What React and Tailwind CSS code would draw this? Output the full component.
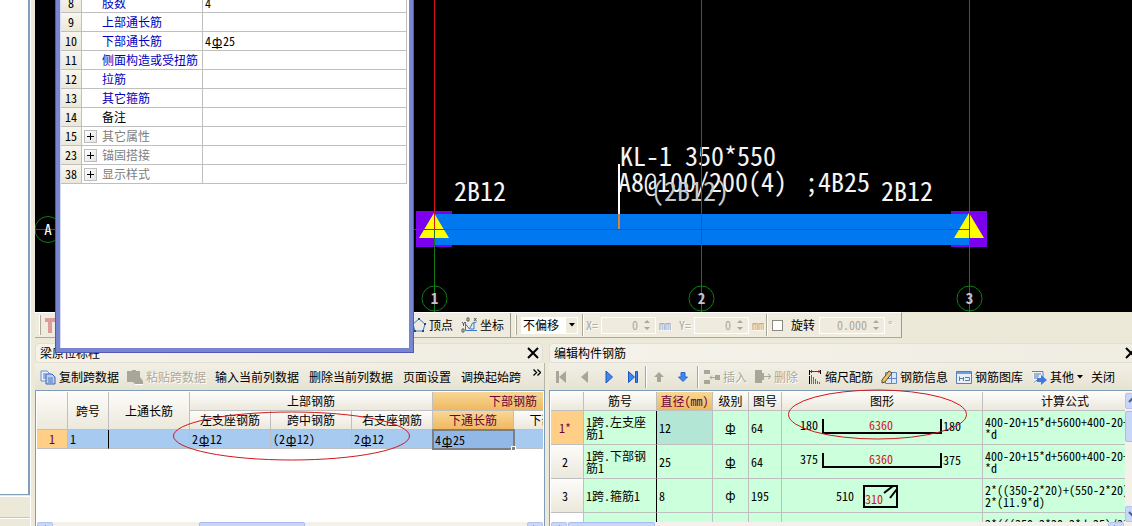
import React from "react";

const line = "border-[#bfbfbf]";
const headBg = "bg-linear-to-b from-[#fdfcf9] to-[#ebe8dc]";
const activeBg = "bg-linear-to-b from-[#f8d796] to-[#efb85e] text-[#6a003a]";

/* Rebar grade mark: plain for grade I, underlined for grade II. */
function Grade({ plain }) {
  return (
    <span
      className={
        plain
          ? "inline-block w-3 text-center font-['DejaVu_Sans',sans-serif] leading-3"
          : "inline-block w-3 text-center font-['DejaVu_Sans',sans-serif] leading-3 underline decoration-1 underline-offset-1 [text-decoration-skip-ink:none]"
      }
    >
      ф
    </span>
  );
}

function Svg({ children, w = 16 }) {
  return (
    <svg width={w} height="16" viewBox={`0 0 ${w} 16`} fill="none" className="shrink-0" aria-hidden="true">
      {children}
    </svg>
  );
}

function Tool({ icon, label, disabled, children }) {
  return (
    <button
      type="button"
      disabled={disabled}
      className="flex shrink-0 items-center gap-[3px] whitespace-nowrap text-black disabled:text-[#aca899] disabled:[text-shadow:1px_1px_0_#fff]"
    >
      {icon}
      <span>{label}</span>
      {children}
    </button>
  );
}

function IconButton({ label, disabled, children }) {
  return (
    <button type="button" aria-label={label} disabled={disabled} className="flex w-6 shrink-0 justify-center">
      <Svg>{children}</Svg>
    </button>
  );
}

function Separator() {
  return <span className="h-[22px] w-0.5 shrink-0 border-l border-[#aca899] bg-white" />;
}

const properties = [
  { n: 8, name: "肢数", value: "4" },
  { n: 9, name: "上部通长筋" },
  { n: 10, name: "下部通长筋", value: <>4<Grade />25</> },
  { n: 11, name: "侧面构造或受扭筋" },
  { n: 12, name: "拉筋" },
  { n: 13, name: "其它箍筋" },
  { n: 14, name: "备注", tone: "text-black" },
  { n: 15, name: "其它属性", group: true },
  { n: 23, name: "锚固搭接", group: true },
  { n: 38, name: "显示样式", group: true },
];

function PropertyWindow() {
  return (
    <section
      aria-label="属性"
      className="absolute -top-px left-[55px] h-[354px] w-[359px] border-x-[5px] border-b-[5px] border-[#7886d2] bg-white shadow-[inset_1px_0_0_#d8dcf2] outline outline-1 -outline-offset-1 outline-[#5258b4]"
    >
      <div className="flex h-[185px] flex-col justify-end overflow-hidden pr-0.5 pl-px">
        <table className="w-full table-fixed border-separate border-spacing-0">
          <colgroup>
            <col className="w-[21px]" />
            <col className="w-[121px]" />
            <col />
          </colgroup>
          <tbody>
            {properties.map((p) => (
              <tr key={p.n} className="h-[19px]">
                <th
                  scope="row"
                  className={`border-r border-b ${line} bg-linear-to-b from-[#f8f6ee] to-[#ebe8d9] p-0 text-center font-normal`}
                >
                  {p.n}
                </th>
                <td className={`border-r border-b ${line} p-0`}>
                  <div className="flex items-center whitespace-nowrap">
                    <span className="flex w-5 shrink-0 pl-0.5">
                      {p.group && (
                        <button
                          type="button"
                          aria-label={`展开${p.name}`}
                          className="flex size-[13px] items-center justify-center border border-[#bdbdbd] bg-linear-to-br from-white to-[#e4e4e4]"
                        >
                          <svg width="7" height="7" aria-hidden="true">
                            <path d="M0 3.500h7M3.500 0v7" stroke="#000" />
                          </svg>
                        </button>
                      )}
                    </span>
                    <span className={p.group ? "text-[#808080]" : p.tone || "text-[#0000c0]"}>{p.name}</span>
                  </div>
                </td>
                <td className={`border-r border-b ${line} p-0 pl-0.5`}>{p.value}</td>
              </tr>
            ))}
          </tbody>
        </table>
      </div>
    </section>
  );
}

function AxisMark({ x, label }) {
  return (
    <g>
      <path d={`M${x} 0V229`} stroke="#d0181c" shapeRendering="crispEdges" />
      <path d={`M${x} 229V312`} stroke="#127a18" shapeRendering="crispEdges" />
      <circle cx={x} cy="298.5" r="12.5" stroke="#127a18" />
      <text x={x} y="304" textAnchor="middle" fill="#c9c0cf" fontSize="15" fontWeight="bold">
        {label}
      </text>
    </g>
  );
}

function Canvas() {
  return (
    <svg className="block h-[312px] w-full shrink-0 bg-black" fill="none" role="img" aria-label="梁平面图">
      <g transform="translate(-35 0)">
        <path d="M416 211h36v36h-36zM951 211h36v36h-36z" fill="#7a00ee" />
        <path d="M434 214h535v31H434z" fill="#0078f0" />
        <path d="M434 213l15 25h-30zM969 213l15 25h-30z" fill="#ffff00" />
        <circle cx="48" cy="229.5" r="13" stroke="#127a18" />
        <path d="M35 229.5h400" stroke="#2a5a3a" />
        <text x="48" y="235" textAnchor="middle" fill="#fff" fontSize="15">A</text>
        <g fill="#f4f4f4" fontSize="26">
          <text x="454" y="201">2B12</text>
          <text x="620" y="166" className="whitespace-pre">KL-1 350*550</text>
          <text x="618" y="192">A8@100/200(4)</text>
          <text x="805" y="192">;4B25</text>
          <text x="651" y="201" fill="#c8c8c8">(2B12)</text>
          <text x="881" y="201">2B12</text>
        </g>
        <path d="M434 229.5h535" stroke="#d0181c" shapeRendering="crispEdges" />
        <AxisMark x={434.5} label="1" />
        <AxisMark x={701.5} label="2" />
        <AxisMark x={969.5} label="3" />
        <path d="M619 164v50" stroke="#fff" strokeWidth="2" />
        <path d="M619 214v15" stroke="#e08030" strokeWidth="2" />
      </g>
    </svg>
  );
}

function Spin({ label, unit, value, wide }) {
  return (
    <label className="flex items-center gap-[3px] text-[#aca899]">
      {label && <span className="[text-shadow:1px_1px_0_#fff]">{label}</span>}
      <span className={`flex h-[17px] items-center border border-white ${wide ? "w-[66px]" : "w-[55px]"}`}>
        <input disabled defaultValue={value} aria-label={label || "旋转角度"} className="w-0 grow bg-transparent text-right" />
        <svg width="17" height="14" className="shrink-0" aria-hidden="true">
          <path d="M6 5l3-3 3 3zM6 9l3 3 3-3z" fill="#aca899" />
        </svg>
      </span>
      <span className="[text-shadow:1px_1px_0_#fff]">{unit}</span>
    </label>
  );
}

function OffsetBar() {
  return (
    <div className="flex h-[26px] w-fit shrink-0 items-center border-t border-r border-b border-t-white border-r-[#9c9a8c] border-b-[#aca899] bg-[#efecdf]">
      <span className="ml-1 h-5 w-0.5 border-r border-[#aca899] bg-white" />
      <span className="ml-1 w-[367px]">
        <Svg>
          <path d="M0 3h12M5 1v15" stroke="#dc9c9a" strokeWidth="4" />
        </Svg>
      </span>
      <div className="flex items-center gap-2">
        <Tool
          label="顶点"
          icon={
            <Svg w={14}>
              <path d="M7 2L13 7L11 14H3L1 7z" stroke="#3a78c8" />
              <path d="M6 1h2v2H6zM12 6h2v2h-2zM10 13h2v2h-2zM2 13h2v2H2z" fill="#1c4a90" />
            </Svg>
          }
        />
        <Tool
          label="坐标"
          icon={
            <Svg>
              <path d="M4.500 5v8.500H16M4.500 7l4 5 3-6 4-1M9 12h4V6" stroke="#3a78c8" />
              <path d="M1 5l1.500 2L4 5M2.500 7v2M13 1l2.500 3M15.500 1L13 4M1 12h2v3H1zM6 1h2v3H6z" stroke="#555" />
            </Svg>
          }
        />
      </div>
      <span className="mr-1 ml-1.5 h-6 w-px bg-[#9c9a8c]" />
      <span className="h-5 w-0.5 border-r border-[#aca899] bg-white" />
      <span className="relative ml-1 flex">
        <select aria-label="偏移方式" className="h-[17px] w-[57px] appearance-none bg-white pl-0.5 text-black" defaultValue="不偏移">
          <option>不偏移</option>
        </select>
        <span className="pointer-events-none absolute top-0 right-0 flex h-[17px] w-[13px] items-center justify-center border border-white bg-[#efecdf]">
          <svg width="6" height="4" aria-hidden="true">
            <path d="M0 0h6L3 3.500z" fill="#000" />
          </svg>
        </span>
      </span>
      <span className="mr-0.5 ml-1 flex"><Separator /></span>
      <Spin label="X=" unit="mm" value="0" />
      <span className="w-2" />
      <Spin label="Y=" unit="mm" value="0" />
      <span className="mr-1 ml-0.5 flex"><Separator /></span>
      <label className="flex items-center gap-2">
        <input type="checkbox" className="size-[11px] appearance-none border border-[#8a8a80] bg-white" />
        旋转
      </label>
      <span className="w-1" />
      <Spin unit="°" value="0.000" wide />
      <span className="w-2" />
    </div>
  );
}

function PanelTitle({ children, bleed }) {
  return (
    <header
      className={`flex h-5 shrink-0 items-center justify-between rounded-sm border border-[#e2dfd2] bg-linear-to-r from-[#f4f2ea] to-[#f0eee3] pr-[3px] pl-1 ${
        bleed ? "-mr-[9px]" : "mr-0.5"
      }`}
    >
      <h2 className="whitespace-nowrap">{children}</h2>
      <button type="button" aria-label="关闭面板">
        <svg width="12" height="12" aria-hidden="true">
          <path d="M1 1l10 10M11 1L1 11" stroke="#000" strokeWidth="2" />
        </svg>
      </button>
    </header>
  );
}

function ScrollEnd({ dir }) {
  const d = {
    up: "M4 9l4-4 4 4",
    down: "M4 6l4 4 4-4",
    left: "M9 4L5 8l4 4",
    right: "M6 4l4 4-4 4",
  }[dir];
  return (
    <span className="size-4 shrink-0 rounded-xs border border-[#b4c4f0] bg-[#c8d6fa]">
      <svg width="14" height="14" viewBox="1 1 14 14" fill="none" aria-hidden="true">
        <path d={d} stroke="#4d6185" strokeWidth="2" />
      </svg>
    </span>
  );
}

function Th({ active, className = "", ...rest }) {
  return (
    <th
      {...rest}
      className={`border-r border-b ${line} p-0 text-center font-normal whitespace-nowrap ${active ? activeBg : headBg} ${className}`}
    />
  );
}

function SpanPanel() {
  const cell = `border-r border-b ${line} p-0 pl-0.5 text-left`;
  return (
    <section className="flex min-w-0 flex-col">
      <PanelTitle>梁原位标柱</PanelTitle>
      <div className="flex h-[27px] shrink-0 items-center gap-2 overflow-hidden border-r border-[#b8b5a6] bg-linear-to-b from-[#f2f0e6] to-[#e6e3d2] pl-[5px]">
        <Tool
          label="复制跨数据"
          icon={
            <Svg>
              <path d="M1 2h6l2 2v8H1z" fill="#eaf2ff" stroke="#6c8cc8" />
              <path d="M6 5h6l3 3v7H6z" fill="#b8d0f6" stroke="#3f64b0" />
              <path d="M3 5h3M3 7h3M3 9h3M8 9h5M8 11h5M8 13h5" stroke="#4a74c0" />
            </Svg>
          }
        />
        <Tool
          disabled
          label="粘贴跨数据"
          icon={
            <Svg>
              <path d="M0 2h5V1h4v1h4v6l3 4v3H8l-2-2H0z" fill="#a8a698" />
              <path d="M8 15.500h8.500V12" stroke="#fff" />
            </Svg>
          }
        />
        <span className="flex gap-2.5 pl-px">
          <Tool label="输入当前列数据" />
          <Tool label="删除当前列数据" />
          <Tool label="页面设置" />
          <Tool label="调换起始跨" />
        </span>
        <button type="button" aria-label="更多" className="mb-2 ml-1">
          <svg width="8" height="7" fill="none" aria-hidden="true">
            <path d="M.5 .5l3 3-3 3M4.500 .5l3 3-3 3" stroke="#000" strokeWidth="1.400" />
          </svg>
        </button>
      </div>
      <div className="flex flex-col border border-b-0 border-[#7f9db9] bg-white p-px">
        <div className="h-[130px] overflow-hidden">
          <table className="w-[557px] table-fixed border-separate border-spacing-0">
            <colgroup>
              <col className="w-[31px]" />
              <col className="w-[41px]" />
              <col className="w-[81px]" />
              <col className="w-[81px]" />
              <col className="w-[81px]" />
              <col className="w-[81px]" />
              <col className="w-[81px]" />
              <col className="w-[80px]" />
            </colgroup>
            <thead>
              <tr className="h-[19px]">
                <Th rowSpan={2} />
                <Th rowSpan={2}>跨号</Th>
                <Th rowSpan={2}>上通长筋</Th>
                <Th colSpan={3}>上部钢筋</Th>
                <Th colSpan={2} active>下部钢筋</Th>
              </tr>
              <tr className="h-[19px]">
                <Th>左支座钢筋</Th>
                <Th>跨中钢筋</Th>
                <Th>右支座钢筋</Th>
                <Th active>下通长筋</Th>
                <Th>下部钢筋</Th>
              </tr>
            </thead>
            <tbody>
              <tr className="h-[19px] bg-[#a6caf0]">
                <th scope="row" className={`border-r border-b ${line} bg-[#ffcf87] p-0 text-center font-normal text-[#6a003a]`}>1</th>
                <td className="border-r border-b border-r-black border-b-[#bfbfbf] p-0 pl-0.5">1</td>
                <td className={cell} />
                <td className={cell}>2<Grade />12</td>
                <td className={cell}>(2<Grade />12)</td>
                <td className={cell}>2<Grade />12</td>
                <td className="relative bg-[#92b8e8] p-0 pl-0.5 outline-2 -outline-offset-1 outline-[#7b7f84]">
                  4<Grade />25
                  <span className="absolute -right-0.5 -bottom-0.5 size-[5px] border border-white bg-[#7b7f84]" />
                </td>
                <td className={cell} />
              </tr>
            </tbody>
          </table>
        </div>
        <div className="flex h-4 shrink-0 bg-[#f3f1ea]">
          <ScrollEnd dir="left" />
          <span className="ml-[146px] w-[106px] rounded-xs border border-[#a8baf0] bg-[#c8d6fa]" />
          <span className="ml-auto flex"><ScrollEnd dir="right" /></span>
        </div>
      </div>
    </section>
  );
}

function BarShape({ end, length }) {
  return (
    <svg width="200" height="33" className="block" fill="none" role="img" aria-label={`${end} ${length} ${end}`}>
      <path d="M41 8v14M159 8v14" stroke="#000" strokeWidth="2" />
      <path d="M40 22h120" stroke="#000" strokeWidth="2" />
      <text x="18" y="19" fill="#000" fontSize="12">{end}</text>
      <text x="99" y="19" textAnchor="middle" fill="#d0181c" fontSize="12">{length}</text>
      <text x="161" y="20" fill="#000" fontSize="12">{end}</text>
    </svg>
  );
}

function StirrupShape() {
  return (
    <svg width="200" height="33" className="block" fill="none" role="img" aria-label="510 310">
      <path d="M82 7h33v21H82z" stroke="#000" strokeWidth="2" />
      <path d="M102 14l9-7M108 19l7-9" stroke="#000" strokeWidth="2" />
      <text x="54" y="22" fill="#000" fontSize="12">510</text>
      <text x="83" y="25" fill="#d0181c" fontSize="12">310</text>
    </svg>
  );
}

const bars = [
  { n: "1*", name: "1跨.左支座筋1", dia: 12, code: 64, shape: <BarShape end="180" length="6360" />, formula: ["400-20+15*d+5600+400-20+15", "*d"], active: true },
  { n: "2", name: "1跨.下部钢筋1", dia: 25, code: 64, shape: <BarShape end="375" length="6360" />, formula: ["400-20+15*d+5600+400-20+15", "*d"] },
  { n: "3", name: "1跨.箍筋1", dia: 8, code: 195, plain: true, shape: <StirrupShape />, formula: ["2*((350-2*20)+(550-2*20))+", "2*(11.9*d)"] },
  { n: "", name: "", dia: "", code: "", empty: true, formula: ["2*(((350-2*20-2*d-25)/3*1+", "25+2*d)"] },
];

function BarPanel() {
  const cell = `border-r border-b ${line} p-0 pl-0.5`;
  return (
    <section className="flex min-w-0 flex-col overflow-hidden">
      <PanelTitle bleed>编辑构件钢筋</PanelTitle>
      <div className="flex h-[27px] shrink-0 items-center bg-linear-to-b from-[#f2f0e6] to-[#e6e3d2]">
        <IconButton label="第一条" disabled>
          <path d="M3 2h3v12H3zM13 2v12L6 8z" fill="#a8a698" />
        </IconButton>
        <IconButton label="上一条" disabled>
          <path d="M11 2v12L4 8z" fill="#a8a698" />
        </IconButton>
        <IconButton label="下一条">
          <path d="M5 2l6.500 6L5 14z" fill="#3f86ee" stroke="#1d55c0" />
        </IconButton>
        <IconButton label="最后一条">
          <path d="M3.500 2.500l6 5.500-6 5.500zM10.500 2.500h2v11h-2z" fill="#3f86ee" stroke="#1d55c0" />
        </IconButton>
        <Separator />
        <IconButton label="上移" disabled>
          <path d="M8 3l5 5h-3v5H6V8H3z" fill="#a8a698" />
        </IconButton>
        <IconButton label="下移">
          <path d="M8 12.500L3.500 8H6V3.500h4V8h2.500z" fill="#3f86ee" stroke="#2a66d0" />
        </IconButton>
        <span className="ml-0.5 flex"><Separator /></span>
        <div className="flex items-center gap-2 pl-[5px]">
          <Tool
            disabled
            label="插入"
            icon={
              <Svg>
                <path d="M0 1h6v4H0zM0 11h6v4H0zM11 6h5v5h-5z" fill="#a8a698" />
                <path d="M6 8.500h5M8 6.500l-2 2 2 2" stroke="#a8a698" />
              </Svg>
            }
          />
          <Tool
            disabled
            label="删除"
            icon={
              <Svg>
                <path d="M0 1h7v3h2v7H7v3H0z" fill="#a8a698" />
                <path d="M9 7.500h6M13 5l3 2.500-3 2.500" stroke="#a8a698" />
              </Svg>
            }
          />
          <Tool
            label="缩尺配筋"
            icon={
              <Svg>
                <path d="M3.500 1v5M14.500 1v4M3.500 7v8" stroke="#000" />
                <path d="M4 2.500h10M6 1L4.500 2.500 6 4M12.500 1L14 2.500 12.500 4" stroke="#b01818" />
                <path d="M5.500 6v9M7.500 8v7M9.500 10v5M11.500 12v3M13.500 13v2" stroke="#5a6a88" />
              </Svg>
            }
          />
          <Tool
            label="钢筋信息"
            icon={
              <Svg>
                <path d="M4.500 3.500h11v11h-11z" fill="#dce8fa" stroke="#6288c4" />
                <path d="M10.500 4v10M5 9.500h10" stroke="#6288c4" />
                <path d="M1 11L8 2l3 2-7 9-3 1z" fill="#e9c46a" stroke="#5c4a28" />
              </Svg>
            }
          />
          <Tool
            label="钢筋图库"
            icon={
              <Svg>
                <path d="M.5 2.500h15v12H.5z" fill="#e6effa" stroke="#5580b8" />
                <path d="M1 3h14v2H1z" fill="#6d9ee0" />
                <path d="M3.500 12V7.500M3.500 9.500h4M7.500 8v4M9 8.500h4.500v3H9" stroke="#5f7f90" />
              </Svg>
            }
          />
          <Tool
            label="其他"
            icon={
              <Svg>
                <path d="M1 2.500h11v9H5l-2 2" fill="#eaf1fb" stroke="#6080b0" />
                <path d="M3 5h7M3 7h5M3 9h4" stroke="#5878a8" />
                <path d="M6 9h4V6l6 5-6 5v-3H6z" fill="#3f78e0" />
              </Svg>
            }
          >
            <svg width="6" height="4" aria-hidden="true">
              <path d="M0 0h6L3 3.500z" fill="#000" />
            </svg>
          </Tool>
          <Tool label="关闭" />
        </div>
      </div>
      <div className="border-t border-l border-[#7f9db9] bg-white pt-px pl-px">
        <div className="flex h-[130px]">
          <div className="min-w-0 flex-1 overflow-hidden">
            <table className="w-[597px] table-fixed border-separate border-spacing-0">
              <colgroup>
                <col className="w-[33px]" />
                <col className="w-[73px]" />
                <col className="w-[56px]" />
                <col className="w-[36px]" />
                <col className="w-[33px]" />
                <col className="w-[201px]" />
                <col className="w-[165px]" />
              </colgroup>
              <thead>
                <tr className="h-[19px]">
                  <Th />
                  <Th>筋号</Th>
                  <Th active>直径(mm)</Th>
                  <Th>级别</Th>
                  <Th>图号</Th>
                  <Th>图形</Th>
                  <Th>计算公式</Th>
                </tr>
              </thead>
              <tbody className="bg-[#ccffdb] leading-3">
                {bars.map((b, i) => (
                  <tr key={i} className="h-[34px]">
                    <th
                      scope="row"
                      className={`border-r border-b ${line} p-0 pr-1 text-center font-normal ${
                        b.active ? "bg-[#ffcf87] text-[#6a003a]" : b.empty ? "bg-white" : headBg
                      }`}
                    >
                      {b.n}
                    </th>
                    <td className="border-r border-b border-r-black border-b-[#bfbfbf] p-0 pr-2 pl-0.5">{b.name}</td>
                    <td className={`${cell} ${b.active ? "bg-[#b4e6d6]" : ""}`}>{b.dia}</td>
                    <td className={`border-r border-b ${line} p-0 text-center`}>{!b.empty && <Grade plain={b.plain} />}</td>
                    <td className={cell}>{b.code}</td>
                    <td className={`border-r border-b ${line} p-0`}>{b.shape}</td>
                    <td className={`${cell} whitespace-nowrap`}>
                      {b.formula[0]}
                      <br />
                      {b.formula[1]}
                    </td>
                  </tr>
                ))}
              </tbody>
            </table>
          </div>
          <div className="flex w-[7px] shrink-0 flex-col overflow-hidden bg-[#f3f1ea] pt-px">
            <ScrollEnd dir="up" />
            <span className="mt-0.5 h-[31px] w-4 rounded-xs border border-[#a8baf0] bg-[#c8d6fa]" />
            <span className="mt-auto flex"><ScrollEnd dir="down" /></span>
          </div>
        </div>
        <div className="flex h-4 bg-[#f3f1ea]">
          <ScrollEnd dir="left" />
          <span className="ml-px w-[87px] rounded-xs border border-[#a8baf0] bg-[#c8d6fa]" />
          <span className="mr-2 ml-auto flex"><ScrollEnd dir="right" /></span>
        </div>
      </div>
    </section>
  );
}

export default function App() {
  return (
    <div className="relative flex h-screen overflow-hidden bg-[#ece9d8] font-['Noto_Sans_CJK_SC',sans-serif] text-xs leading-4 text-black [font-feature-settings:'hwid']">
      <aside className="flex w-[31px] shrink-0 flex-col border-r border-white">
        <div className="min-h-0 flex-1 border-r-2 border-b border-[#7f9db9] bg-white" />
        <div className="mt-px h-[22px] border-t border-b border-t-white border-b-[#c8c5b4]" />
        <div className="h-2 border-t border-white" />
      </aside>
      <main className="ml-1 flex min-w-0 flex-1 flex-col">
        <Canvas />
        <OffsetBar />
        <div className="mt-[5px] grid grid-cols-[minmax(0,510fr)_minmax(0,583fr)] gap-1">
          <SpanPanel />
          <BarPanel />
        </div>
      </main>
      <PropertyWindow />
      <svg className="pointer-events-none absolute inset-0 size-full" fill="none" aria-hidden="true">
        <ellipse cx="291.500" cy="436" rx="118" ry="24" stroke="#d0181c" />
        <ellipse cx="877.500" cy="414.500" rx="89" ry="24.500" stroke="#d0181c" />
      </svg>
    </div>
  );
}
